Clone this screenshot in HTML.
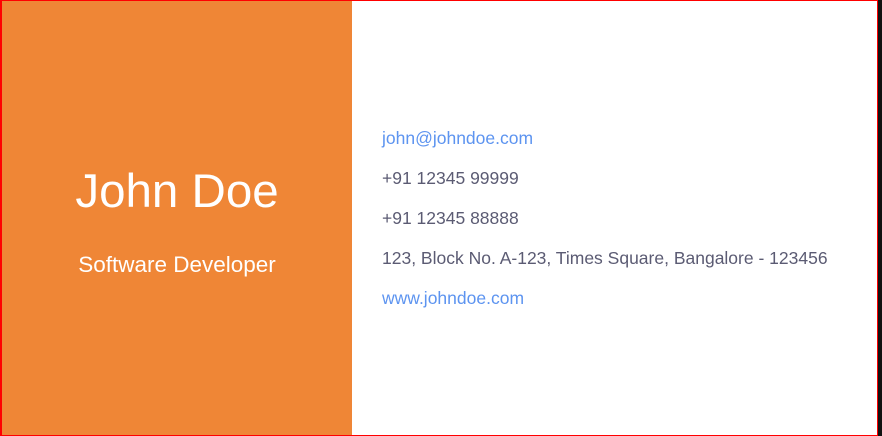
<!DOCTYPE html>
<html><head><style>
html,body{margin:0;padding:0;width:882px;height:436px;overflow:hidden;background:#111;}
.card{position:absolute;left:0;top:0;width:875px;height:434px;border:1px solid #f00;border-left-width:2px;background:#fff;font-family:"Liberation Sans",sans-serif;}
.left{position:absolute;left:0;top:0;width:350px;height:434px;background:#ef8636;color:#fff;text-align:center;}
.name{position:absolute;top:163px;width:100%;font-size:47.5px;}
.title{position:absolute;top:251px;width:100%;font-size:22.5px;}
.right{position:absolute;left:380px;top:127px;font-size:17.5px;color:#5b5b73;}
.right div{height:40px;}
.link{color:#5d94f0;}
</style></head><body>
<div class="card">
<div class="left"><div class="name">John Doe</div><div class="title">Software Developer</div></div>
<div class="right">
<div class="link">john@johndoe.com</div>
<div>+91 12345 99999</div>
<div>+91 12345 88888</div>
<div>123, Block No. A-123, Times Square, Bangalore - 123456</div>
<div class="link">www.johndoe.com</div>
</div>
</div>
</body></html>
